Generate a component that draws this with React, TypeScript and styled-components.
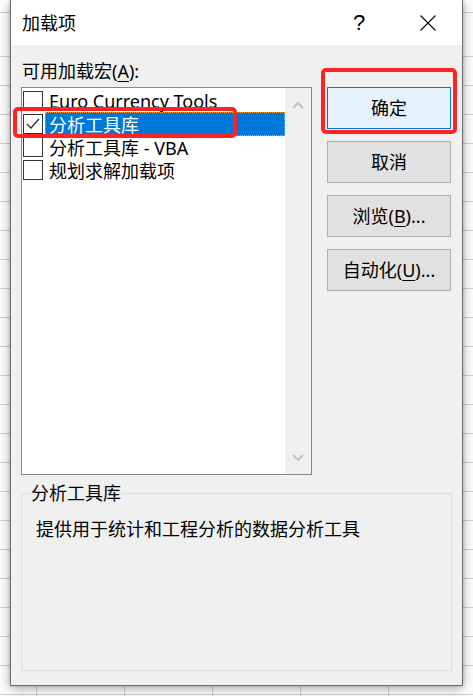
import React from "react";
import styled, { createGlobalStyle } from "styled-components";

const GlobalStyle = createGlobalStyle`
  html, body { margin: 0; padding: 0; }
  body {
    font-family: "Noto Sans", "Noto Sans CJK SC", sans-serif;
    color: #000;
  }
`;

const Page = styled.div`
  width: 473px;
  height: 696px;
  overflow: hidden;
  box-sizing: border-box;
  padding-left: 10px;
  background-color: #fff;
  background-image:
    linear-gradient(#d0d0d0, #d0d0d0),
    linear-gradient(#fff, #fff),
    repeating-linear-gradient(to bottom, transparent 0 27px, #d0d0d0 27px 28px, transparent 28px 29px),
    repeating-linear-gradient(to right, transparent 0 36px, #d0d0d0 36px 37px, transparent 37px 88px);
  background-size: 100% 1px, 100% 43px, 100% 100%, 100% 100%;
  background-position: 0 12px, 0 13px, 0 0, 0 0;
  background-repeat: no-repeat, no-repeat, repeat, repeat;
`;

const Dialog = styled.div`
  position: relative;
  width: 453px;
  height: 686px;
  box-sizing: border-box;
  border: 1px solid #6b6b6b;
  border-top: none;
  background: #f0f0f0;
  display: flex;
  flex-direction: column;
  box-shadow: 0 3px 12px rgba(0, 0, 0, 0.32), 0 0 4px rgba(0, 0, 0, 0.2);
`;

const TitleBar = styled.div`
  height: 45px;
  flex: none;
  display: flex;
  align-items: center;
  background: #fff;
  padding-left: 11px;
`;

const Title = styled.div`
  flex: 1;
  font-size: 18px;
  line-height: 24px;
`;

const TitleButton = styled.div<{ $w: number }>`
  width: ${(p) => p.$w}px;
  height: 45px;
  display: flex;
  align-items: center;
  justify-content: center;
  font-family: "Liberation Sans", sans-serif;
  font-size: 22px;
  font-weight: 400;
`;

const Body = styled.div`
  flex: 1;
  display: flex;
  flex-direction: column;
  padding: 14px 10px 14px 10px;
  min-height: 0;
`;

const TopRow = styled.div`
  display: flex;
  gap: 15px;
`;

const LeftCol = styled.div`
  width: 291px;
  display: flex;
  flex-direction: column;
`;

const Label = styled.div`
  font-size: 18px;
  line-height: 24px;
  margin-bottom: 4px;
  padding-left: 1px;
`;

const Mn = styled.span`
  text-decoration: underline;
  text-decoration-thickness: 1px;
  text-underline-offset: 3px;
`;

const ListBox = styled.div`
  height: 388px;
  box-sizing: border-box;
  border: 1px solid #828790;
  background: #fff;
  display: flex;
`;

const Items = styled.div`
  flex: 1;
  padding-top: 1px;
`;

const Row = styled.div`
  height: 23px;
  display: flex;
  align-items: center;
`;

const Check = styled.div`
  width: 20px;
  height: 20px;
  box-sizing: border-box;
  border: 1px solid #333;
  margin-left: 1px;
  background: #fff;
  flex: none;
  display: flex;
  align-items: center;
  justify-content: center;
`;

const ItemText = styled.div<{ $sel?: boolean }>`
  flex: 1;
  margin-left: 2px;
  height: 24px;
  box-sizing: border-box;
  display: flex;
  align-items: center;
  font-size: 18px;
  white-space: nowrap;
  padding-left: ${(p) => (p.$sel ? 3 : 4)}px;
  background: ${(p) => (p.$sel ? "#0078d7" : "transparent")};
  color: ${(p) => (p.$sel ? "#fff" : "#000")};
  border: ${(p) => (p.$sel ? "1px dotted #f2a33a" : "none")};
`;

const ScrollBar = styled.div`
  width: 26px;
  flex: none;
  background: #f0f0f0;
  display: flex;
  flex-direction: column;
  justify-content: space-between;
`;

const ArrowBtn = styled.div`
  height: 33px;
  display: flex;
  align-items: center;
  justify-content: center;
`;

const RightCol = styled.div`
  width: 125px;
  padding-top: 28px;
  display: flex;
  flex-direction: column;
  gap: 12px;
`;

const Button = styled.div<{ $default?: boolean }>`
  width: 124px;
  height: 42px;
  box-sizing: border-box;
  border: 1px solid ${(p) => (p.$default ? "#0078d7" : "#adadad")};
  background: ${(p) => (p.$default ? "#e5f1fb" : "#e1e1e1")};
  display: flex;
  align-items: center;
  justify-content: center;
  font-size: 18px;
  line-height: 24px;
`;

const Group = styled.fieldset`
  flex: 1;
  margin: 6px 0 0 0;
  border: 1px solid #dcdcdc;
  padding: 12px 14px;
  min-width: 0;
`;

const Legend = styled.legend`
  font-size: 18px;
  line-height: 24px;
  padding: 0;
  margin-left: -5px;
`;

const Desc = styled.div`
  font-size: 18px;
  line-height: 24px;
`;

const Highlight = styled.div<{ $l: number; $t: number; $w: number; $h: number }>`
  position: absolute;
  left: ${(p) => p.$l}px;
  top: ${(p) => p.$t}px;
  width: ${(p) => p.$w}px;
  height: ${(p) => p.$h}px;
  box-sizing: border-box;
  border: 4px solid #ff2323;
  border-radius: 5px;
  pointer-events: none;
`;

const CheckMark = () => (
  <svg width="16" height="16" viewBox="0 0 16 16">
    <polyline points="2,8 6,12 14,3" fill="none" stroke="#333" strokeWidth="1.4" />
  </svg>
);

const Chevron = ({ up }: { up?: boolean }) => (
  <svg width="12" height="8" viewBox="0 0 12 8">
    <polyline
      points={up ? "1,7 6,2 11,7" : "1,1 6,6 11,1"}
      fill="none"
      stroke="#c2c2c2"
      strokeWidth="2.2"
    />
  </svg>
);

const CloseIcon = () => (
  <svg width="16" height="16" viewBox="0 0 16 16">
    <path d="M0.5 0.5 L15.5 15.5 M15.5 0.5 L0.5 15.5" stroke="#000" strokeWidth="1.1" fill="none" />
  </svg>
);

const items = [
  { label: "Euro Currency Tools", checked: false, sel: false },
  { label: "分析工具库", checked: true, sel: true },
  { label: "分析工具库 - VBA", checked: false, sel: false },
  { label: "规划求解加载项", checked: false, sel: false },
];

export default function App() {
  return (
    <>
      <GlobalStyle />
      <Page>
        <Dialog>
          <TitleBar>
            <Title>加载项</Title>
            <TitleButton $w={70}>?</TitleButton>
            <TitleButton $w={68}>
              <CloseIcon />
            </TitleButton>
          </TitleBar>
          <Body>
            <TopRow>
              <LeftCol>
                <Label>
                  可用加载宏(<Mn>A</Mn>):
                </Label>
                <ListBox>
                  <Items>
                    {items.map((it) => (
                      <Row key={it.label}>
                        <Check>{it.checked && <CheckMark />}</Check>
                        <ItemText $sel={it.sel}>{it.label}</ItemText>
                      </Row>
                    ))}
                  </Items>
                  <ScrollBar>
                    <ArrowBtn>
                      <Chevron up />
                    </ArrowBtn>
                    <ArrowBtn>
                      <Chevron />
                    </ArrowBtn>
                  </ScrollBar>
                </ListBox>
              </LeftCol>
              <RightCol>
                <Button $default>确定</Button>
                <Button>取消</Button>
                <Button>
                  浏览(<Mn>B</Mn>)...
                </Button>
                <Button>
                  自动化(<Mn>U</Mn>)...
                </Button>
              </RightCol>
            </TopRow>
            <Group>
              <Legend>分析工具库</Legend>
              <Desc>提供用于统计和工程分析的数据分析工具</Desc>
            </Group>
          </Body>
          <Highlight $l={2} $t={107} $w={224} $h={31} />
          <Highlight $l={310} $t={68} $w={136} $h={66} />
        </Dialog>
      </Page>
    </>
  );
}
